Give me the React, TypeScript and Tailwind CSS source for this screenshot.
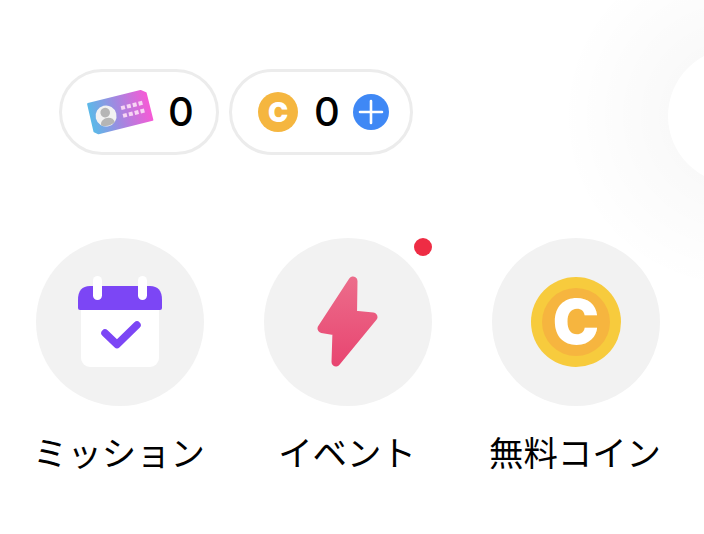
import React from 'react';

const TicketIcon = () => (
  <svg width="70" height="50" viewBox="0 0 70 50" className="shrink-0">
    <defs>
      <linearGradient id="ticketFill" x1="0" y1="0" x2="1" y2="0">
        <stop offset="0" stopColor="#5cb8e8" />
        <stop offset="0.5" stopColor="#a685e0" />
        <stop offset="1" stopColor="#f45bd6" />
      </linearGradient>
    </defs>
    <g transform="rotate(-14 36 25)">
      <path
        d="M7 9.5 L61 9.5 L65.5 13 L65.5 40.5 L10 40.5 L6.5 37.5 Z"
        fill="url(#ticketFill)"
        stroke="url(#ticketFill)"
        strokeWidth="2"
        strokeLinejoin="round"
      />
      <circle cx="21.5" cy="25.5" r="10.5" fill="#f2f2f2" />
      <circle cx="21.5" cy="22" r="4.8" fill="#b5b5b5" />
      <path d="M14.5 33.5 C14.5 25.5 28.5 25.5 28.5 33.5 Q21.5 37.5 14.5 33.5 Z" fill="#b5b5b5" />
      {[38, 44, 50, 56].map((x) => (
        <React.Fragment key={x}>
          <rect x={x} y="19.5" width="4" height="4" fill="#f7d5f3" />
          <rect x={x} y="27.5" width="4" height="4" fill="#f7d5f3" />
        </React.Fragment>
      ))}
    </g>
  </svg>
);

const CalendarIcon = () => (
  <svg width="84" height="92" viewBox="0 0 84 92">
    <rect x="3" y="16" width="78" height="75" rx="9" fill="#ffffff" />
    <path d="M0 24 Q0 10 12 10 L72 10 Q84 10 84 24 L84 32 Q84 34 82 34 L2 34 Q0 34 0 32 Z" fill="#7c46f5" />
    <rect x="15" y="0" width="9" height="24" rx="4.5" fill="#ffffff" />
    <rect x="60" y="0" width="9" height="24" rx="4.5" fill="#ffffff" />
    <path d="M27 57 L39 68.5 L59 49" fill="none" stroke="#7c46f5" strokeWidth="7.5" strokeLinecap="round" strokeLinejoin="round" />
  </svg>
);

const BoltIcon = () => (
  <svg width="62" height="92" viewBox="0 0 62 92">
    <defs>
      <linearGradient id="boltFill" gradientUnits="userSpaceOnUse" x1="0" y1="0" x2="0" y2="92">
        <stop offset="0" stopColor="#ec6d8b" />
        <stop offset="1" stopColor="#e84470" />
      </linearGradient>
    </defs>
    <path
      d="M36 5 L35.5 39 L56 41 L19 86 L20 55 L5 52.5 Z"
      fill="url(#boltFill)"
      stroke="url(#boltFill)"
      strokeWidth="9"
      strokeLinejoin="round"
    />
  </svg>
);

const CoinIcon = () => (
  <div className="w-[90px] h-[90px] rounded-full bg-[#f7cb3d] flex items-center justify-center">
    <div className="w-[68px] h-[68px] rounded-full bg-[#f6b53f] flex items-center justify-center">
      <span className="text-[62px] font-black leading-none text-white">C</span>
    </div>
  </div>
);

const items = [
  { label: 'ミッション', icon: <CalendarIcon />, dot: false },
  { label: 'イベント', icon: <BoltIcon />, dot: true },
  { label: '無料コイン', icon: <CoinIcon />, dot: false },
];

export default function App() {
  return (
    <div className="relative w-[704px] h-[534px] overflow-hidden bg-white text-black font-['Inter','Noto_Sans_CJK_JP',sans-serif]">
      {/* faint glow from the off-screen button */}
      <div className="absolute left-[536px] top-[-84px] w-[400px] h-[400px] rounded-full bg-[radial-gradient(circle_closest-side,rgba(0,0,0,0.022)_34%,rgba(0,0,0,0)_88%)]" />
      <div className="absolute left-[668px] top-[48px] w-[136px] h-[136px] rounded-full bg-white" />

      <div className="relative pt-[69px] pl-[59px] flex gap-[10px]">
        <div className="w-[160px] h-[86px] rounded-full border-[3px] border-[#ececec] bg-white flex items-center pl-[22px]">
          <TicketIcon />
          <span className="ml-[14px] text-[40px] font-medium leading-none">0</span>
        </div>
        <div className="w-[184px] h-[86px] rounded-full border-[3px] border-[#ececec] bg-white flex items-center pl-[26px]">
          <div className="w-10 h-10 rounded-full bg-[#f5b63f] flex items-center justify-center">
            <span className="text-[27px] font-black leading-none text-white">C</span>
          </div>
          <span className="ml-4 text-[40px] font-medium leading-none">0</span>
          <div className="ml-[13px] w-9 h-9 rounded-full bg-[#3f88f5] flex items-center justify-center">
            <svg width="26" height="26" viewBox="0 0 26 26">
              <path d="M13 2 V24 M2 13 H24" stroke="#ffffff" strokeWidth="2.6" strokeLinecap="round" />
            </svg>
          </div>
        </div>
      </div>

      <div className="relative mt-[83px] px-9 flex gap-[60px]">
        {items.map((item) => (
          <div key={item.label} className="w-[168px] flex flex-col items-center">
            <div className="relative w-[168px] h-[168px] rounded-full bg-[#f2f2f2] flex items-center justify-center">
              {item.icon}
              {item.dot && <span className="absolute top-0 right-0 w-[18px] h-[18px] rounded-full bg-[#ee2c44]" />}
            </div>
            <div className="mt-6 pr-0.5 text-[34.4px] leading-[48px] whitespace-nowrap">{item.label}</div>
          </div>
        ))}
      </div>
    </div>
  );
}
